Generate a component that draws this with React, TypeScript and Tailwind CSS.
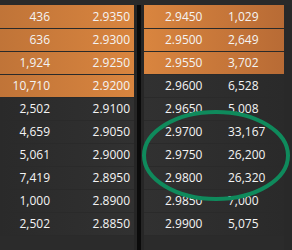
import React from "react";

type Row = { a: string; b: string; hl: boolean };

const left: Row[] = [
  { a: "436", b: "2.9350", hl: true },
  { a: "636", b: "2.9300", hl: true },
  { a: "1,924", b: "2.9250", hl: true },
  { a: "10,710", b: "2.9200", hl: true },
  { a: "2,502", b: "2.9100", hl: false },
  { a: "4,659", b: "2.9050", hl: false },
  { a: "5,061", b: "2.9000", hl: false },
  { a: "7,419", b: "2.8950", hl: false },
  { a: "1,000", b: "2.8900", hl: false },
  { a: "2,502", b: "2.8850", hl: false },
];

const right: Row[] = [
  { a: "2.9450", b: "1,029", hl: true },
  { a: "2.9500", b: "2,649", hl: true },
  { a: "2.9550", b: "3,702", hl: true },
  { a: "2.9600", b: "6,528", hl: false },
  { a: "2.9650", b: "5,008", hl: false },
  { a: "2.9700", b: "33,167", hl: false },
  { a: "2.9750", b: "26,200", hl: false },
  { a: "2.9800", b: "26,320", hl: false },
  { a: "2.9850", b: "7,000", hl: false },
  { a: "2.9900", b: "5,075", hl: false },
];

export default function App() {
  return (
    <div
      className="relative w-[292px] h-[250px] overflow-hidden bg-[#2b2b2b] text-[12px] text-[#f4f4f4]"
      style={{ fontFamily: '"Open Sans", "Noto Sans", sans-serif' }}
    >
      <div className="flex pt-[5px] h-full">
        <div className="w-[134px] flex flex-col">
          {left.map((r, i) => (
            <div
              key={i}
              className={`${i === 0 ? "h-[24px]" : "h-[23px]"} border-b border-[#2a2a2a] grid grid-cols-[50px_1fr] items-center pr-[4px] ${
                r.hl
                  ? "bg-gradient-to-r from-[#c07438] to-[#d9853f]"
                  : "bg-gradient-to-r from-[#2a2a2a] to-[#313131]"
              }`}
            >
              <span className="text-right leading-none">{r.a}</span>
              <span className="text-right leading-none">{r.b}</span>
            </div>
          ))}
        </div>
        <div className="w-[10px] flex -mt-[5px]">
          <div className="w-[3px] bg-[#262626]" />
          <div className="w-[4px] bg-[#0a0a0a]" />
          <div className="w-[3px] bg-[#262626]" />
        </div>
        <div className="w-[140px] flex flex-col">
          {right.map((r, i) => (
            <div
              key={i}
              className={`${i === 0 ? "h-[24px]" : "h-[23px]"} border-b border-[#2a2a2a] flex items-center pl-[21px] ${
                r.hl
                  ? "bg-gradient-to-r from-[#d9853f] to-[#b86b35]"
                  : "bg-gradient-to-r from-[#313131] to-[#2a2a2a]"
              }`}
            >
              <span className="w-[63px] leading-none">{r.a}</span>
              <span className="leading-none">{r.b}</span>
            </div>
          ))}
        </div>
        <div className="flex-1 bg-[#292929]" />
      </div>
      <div className="absolute left-0 top-0 w-full h-[5px] bg-[#2a2a2a]" />
      <svg
        className="absolute left-0 top-0 pointer-events-none"
        width={292}
        height={250}
        viewBox="0 0 292 250"
      >
        <ellipse cx={216} cy={155.5} rx={72} ry={43.5} fill="none" stroke="#0f8a5c" strokeWidth={4} />
      </svg>
    </div>
  );
}
